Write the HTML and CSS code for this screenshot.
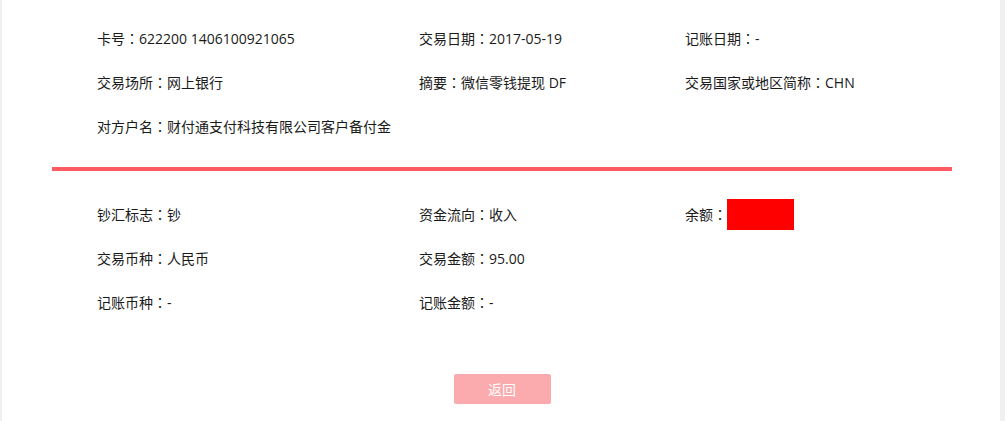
FILE: index.html
```html
<!DOCTYPE html>
<html lang="zh-CN">
<head>
<meta charset="utf-8">
<title>交易详情</title>
<link rel="stylesheet" href="styles.css">
</head>
<body>
<div class="page">
  <div class="panel">
    <div class="grid top">
      <div class="item">卡号<span class="colon">：</span>622200 1406100921065</div>
      <div class="item">交易日期<span class="colon">：</span>2017-05-19</div>
      <div class="item">记账日期<span class="colon">：</span>-</div>
      <div class="item">交易场所<span class="colon">：</span>网上银行</div>
      <div class="item">摘要<span class="colon">：</span>微信零钱提现 DF</div>
      <div class="item">交易国家或地区简称<span class="colon">：</span>CHN</div>
      <div class="item wide">对方户名<span class="colon">：</span>财付通支付科技有限公司客户备付金</div>
    </div>
    <div class="divider"></div>
    <div class="grid bottom">
      <div class="item">钞汇标志<span class="colon">：</span>钞</div>
      <div class="item">资金流向<span class="colon">：</span>收入</div>
      <div class="item">余额<span class="colon">：</span><span class="mask"></span></div>
      <div class="item">交易币种<span class="colon">：</span>人民币</div>
      <div class="item">交易金额<span class="colon">：</span>95.00</div>
      <div class="item"></div>
      <div class="item">记账币种<span class="colon">：</span>-</div>
      <div class="item">记账金额<span class="colon">：</span>-</div>
    </div>
    <div class="actions">
      <button class="btn" type="button">返回</button>
    </div>
  </div>
</div>
</body>
</html>
```

FILE: styles.css
```css
html, body {
  margin: 0;
  padding: 0;
}
body {
  background: #f0f0f0;
  font-family: "Open Sans", "Noto Sans CJK SC", sans-serif;
  font-size: 14px;
  color: #1a1a1a;
}
.page {
  margin-left: 2px;
  width: 998px;
  min-height: 421px;
  background: #fff;
}
.panel {
  margin: 0 48px 0 50px;
  width: 900px;
}
.grid {
  display: grid;
  grid-template-columns: 322px 266px 1fr;
  grid-auto-rows: 44px;
  align-items: center;
  padding: 0 45px;
}
.top {
  padding-top: 16px;
  padding-bottom: 19px;
}
.bottom {
  padding-top: 21px;
}
.item {
  display: flex;
  align-items: center;
  white-space: nowrap;
}
.colon {
  font-family: "Noto Sans CJK JP", "Noto Sans CJK SC", sans-serif;
}
.wide {
  grid-column: 1 / -1;
}
.divider {
  height: 4px;
  background: #ff5b60;
}
.mask {
  display: inline-block;
  width: 67px;
  height: 31px;
  background: #ff0000;
}
.actions {
  display: flex;
  justify-content: center;
  padding-top: 50px;
}
.btn {
  width: 97px;
  height: 30px;
  border: none;
  border-radius: 2px;
  background: #fbaaad;
  color: #fff;
  font-family: "Open Sans", "Noto Sans CJK SC", sans-serif;
  font-size: 14px;
  padding: 0;
}
```
